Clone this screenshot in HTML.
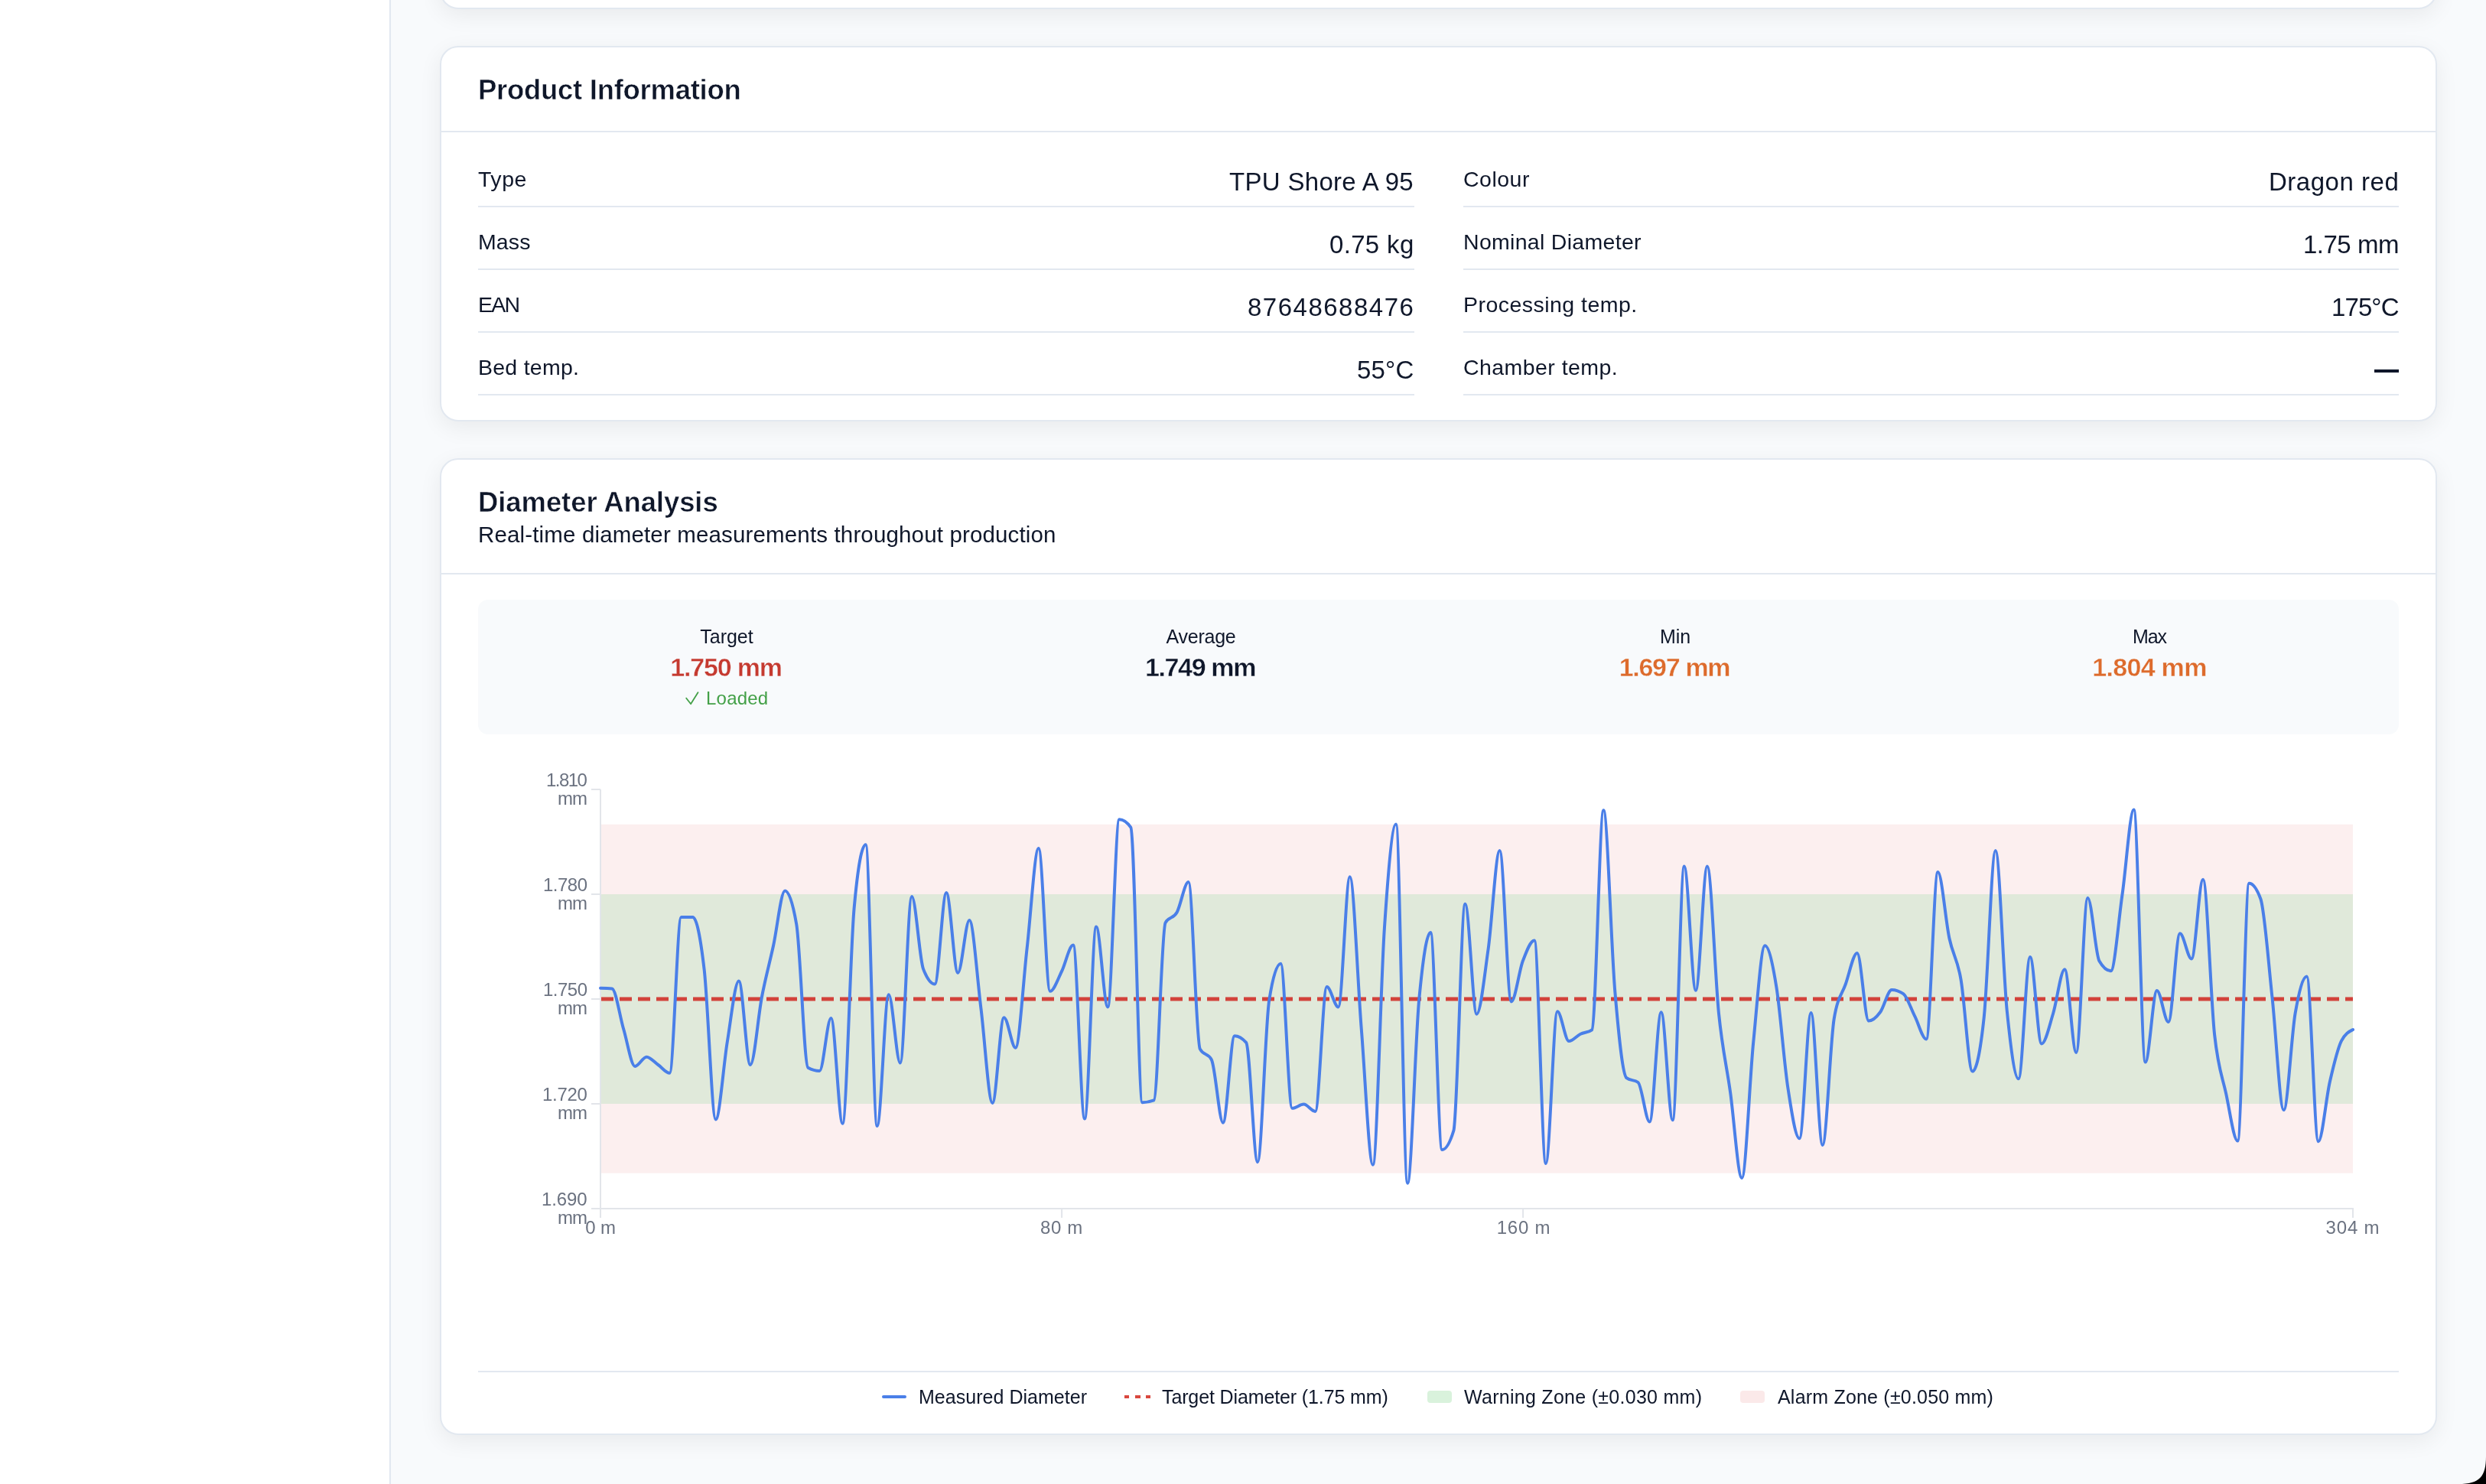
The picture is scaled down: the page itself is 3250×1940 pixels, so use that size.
<!DOCTYPE html>
<html><head><meta charset="utf-8"><title>Diameter Analysis</title><style>
html,body{margin:0;padding:0;}
body{width:3250px;height:1940px;position:relative;overflow:hidden;background:#f8fafc;font-family:"Liberation Sans",sans-serif;}
@media (max-width:2400px){body{zoom:0.5;}}
.t{position:absolute;white-space:nowrap;will-change:transform;}
.sb{position:absolute;left:0;top:0;width:509px;height:1940px;background:#fff;border-right:2px solid #e2e8f0;}
.card{position:absolute;left:575px;width:2607px;background:#fff;border:2px solid #e2e8f0;border-radius:24px;box-shadow:0 8px 30px rgba(0,0,0,0.065);}
.hl{position:absolute;height:2px;background:#e2e8f0;}
</style></head><body>
<div class="sb"></div>
<div class="card" style="top:-298px;height:306px;"></div>
<div class="card" style="top:60px;height:487px;"></div>
<div class="card" style="top:599px;height:1273px;"></div>
<div class="hl" style="left:577px;width:2607px;top:171px;"></div>
<div class="hl" style="left:577px;width:2607px;top:749px;"></div>
<div class="t" style="left:624.5px;top:100.1px;font-size:36.5px;line-height:36.5px;font-weight:700;color:#0f172a;letter-spacing:-0.28px;-webkit-text-stroke:0.5px #fff;">Product Information</div>
<div class="hl" style="left:625px;width:1224px;top:269px;"></div>
<div class="t" style="left:625.0px;top:219.6px;font-size:28.5px;line-height:28.5px;font-weight:400;color:#0f172a;letter-spacing:0.53px;">Type</div>
<div class="t" style="right:1401.7px;top:221.1px;font-size:33px;line-height:33px;font-weight:400;color:#0f172a;letter-spacing:0.31px;">TPU Shore A 95</div>
<div class="hl" style="left:625px;width:1224px;top:351px;"></div>
<div class="t" style="left:625.0px;top:301.6px;font-size:28.5px;line-height:28.5px;font-weight:400;color:#0f172a;letter-spacing:0.10px;">Mass</div>
<div class="t" style="right:1401.7px;top:303.1px;font-size:33px;line-height:33px;font-weight:400;color:#0f172a;letter-spacing:0.33px;">0.75 kg</div>
<div class="hl" style="left:625px;width:1224px;top:433px;"></div>
<div class="t" style="left:625.0px;top:383.6px;font-size:28.5px;line-height:28.5px;font-weight:400;color:#0f172a;letter-spacing:-1.80px;">EAN</div>
<div class="t" style="right:1400.5px;top:385.1px;font-size:33px;line-height:33px;font-weight:400;color:#0f172a;letter-spacing:1.50px;">87648688476</div>
<div class="hl" style="left:625px;width:1224px;top:515px;"></div>
<div class="t" style="left:625.0px;top:465.6px;font-size:28.5px;line-height:28.5px;font-weight:400;color:#0f172a;letter-spacing:0.25px;">Bed temp.</div>
<div class="t" style="right:1401.8px;top:467.1px;font-size:33px;line-height:33px;font-weight:400;color:#0f172a;letter-spacing:0.20px;">55°C</div>
<div class="hl" style="left:1913px;width:1223px;top:269px;"></div>
<div class="t" style="left:1913.0px;top:219.6px;font-size:28.5px;line-height:28.5px;font-weight:400;color:#0f172a;letter-spacing:0.50px;">Colour</div>
<div class="t" style="right:113.5px;top:221.1px;font-size:33px;line-height:33px;font-weight:400;color:#0f172a;letter-spacing:0.52px;">Dragon red</div>
<div class="hl" style="left:1913px;width:1223px;top:351px;"></div>
<div class="t" style="left:1913.0px;top:301.6px;font-size:28.5px;line-height:28.5px;font-weight:400;color:#0f172a;letter-spacing:0.30px;">Nominal Diameter</div>
<div class="t" style="right:114.5px;top:303.1px;font-size:33px;line-height:33px;font-weight:400;color:#0f172a;letter-spacing:-0.50px;">1.75 mm</div>
<div class="hl" style="left:1913px;width:1223px;top:433px;"></div>
<div class="t" style="left:1913.0px;top:383.6px;font-size:28.5px;line-height:28.5px;font-weight:400;color:#0f172a;letter-spacing:0.47px;">Processing temp.</div>
<div class="t" style="right:114.9px;top:385.1px;font-size:33px;line-height:33px;font-weight:400;color:#0f172a;letter-spacing:-0.90px;">175°C</div>
<div class="hl" style="left:1913px;width:1223px;top:515px;"></div>
<div class="t" style="left:1913.0px;top:465.6px;font-size:28.5px;line-height:28.5px;font-weight:400;color:#0f172a;letter-spacing:0.44px;">Chamber temp.</div>
<div style="position:absolute;left:3104px;top:483.4px;width:32px;height:3.4px;background:#0f172a"></div>
<div class="t" style="left:624.5px;top:638.8px;font-size:36.5px;line-height:36.5px;font-weight:700;color:#0f172a;letter-spacing:-0.09px;-webkit-text-stroke:0.5px #fff;">Diameter Analysis</div>
<div class="t" style="left:625.0px;top:683.5px;font-size:29.5px;line-height:29.5px;font-weight:400;color:#0f172a;letter-spacing:0.15px;">Real-time diameter measurements throughout production</div>
<div style="position:absolute;left:625px;top:784px;width:2511px;height:176px;background:#f8fafc;border-radius:13px;"></div>
<div class="t" style="left:-50.0px;width:2000px;text-align:center;top:820.0px;font-size:25px;line-height:25px;font-weight:400;color:#0f172a;letter-spacing:-0.02px;">Target</div>
<div class="t" style="left:-50.6px;width:2000px;text-align:center;top:855.2px;font-size:34px;line-height:34px;font-weight:700;color:#c53a30;letter-spacing:-1.20px;-webkit-text-stroke:0.4px #f8fafc;">1.750 mm</div>
<div class="t" style="left:569.9px;width:2000px;text-align:center;top:820.0px;font-size:25px;line-height:25px;font-weight:400;color:#0f172a;letter-spacing:-0.23px;">Average</div>
<div class="t" style="left:569.3px;width:2000px;text-align:center;top:855.2px;font-size:34px;line-height:34px;font-weight:700;color:#0f172a;letter-spacing:-1.36px;-webkit-text-stroke:0.4px #f8fafc;">1.749 mm</div>
<div class="t" style="left:1190.0px;width:2000px;text-align:center;top:820.0px;font-size:25px;line-height:25px;font-weight:400;color:#0f172a;letter-spacing:-0.10px;">Min</div>
<div class="t" style="left:1189.3px;width:2000px;text-align:center;top:855.2px;font-size:34px;line-height:34px;font-weight:700;color:#dd6b2c;letter-spacing:-1.30px;-webkit-text-stroke:0.4px #f8fafc;">1.697 mm</div>
<div class="t" style="left:1809.5px;width:2000px;text-align:center;top:820.0px;font-size:25px;line-height:25px;font-weight:400;color:#0f172a;letter-spacing:-1.05px;">Max</div>
<div class="t" style="left:1809.6px;width:2000px;text-align:center;top:855.2px;font-size:34px;line-height:34px;font-weight:700;color:#dd6b2c;letter-spacing:-0.71px;-webkit-text-stroke:0.4px #f8fafc;">1.804 mm</div>
<div class="t" style="left:922.6px;top:901.0px;font-size:24px;line-height:24px;font-weight:400;color:#43a047;letter-spacing:0.22px;">Loaded</div>
<svg style="position:absolute;left:890px;top:898px" width="30" height="30"><polyline points="7.2,14.7 13.1,22.3 22.5,7.3" fill="none" stroke="#43a047" stroke-width="1.8" stroke-linecap="round" stroke-linejoin="round"/></svg>
<svg style="position:absolute;left:0;top:0" width="3250" height="1940"><rect x="786" y="1077.7" width="2290" height="456" fill="#fcefef"/><rect x="786" y="1169" width="2290" height="274" fill="#e0e9da"/><line x1="785" y1="1032" x2="785" y2="1592" stroke="#e2e5ea" stroke-width="2"/><line x1="773" y1="1580" x2="3077" y2="1580" stroke="#e2e5ea" stroke-width="2"/><line x1="773" y1="1032" x2="785" y2="1032" stroke="#e2e5ea" stroke-width="2"/><line x1="773" y1="1169" x2="785" y2="1169" stroke="#e2e5ea" stroke-width="2"/><line x1="773" y1="1306" x2="785" y2="1306" stroke="#e2e5ea" stroke-width="2"/><line x1="773" y1="1443" x2="785" y2="1443" stroke="#e2e5ea" stroke-width="2"/><line x1="773" y1="1580" x2="785" y2="1580" stroke="#e2e5ea" stroke-width="2"/><line x1="785" y1="1580" x2="785" y2="1592" stroke="#e2e5ea" stroke-width="2"/><line x1="1388.1" y1="1580" x2="1388.1" y2="1592" stroke="#e2e5ea" stroke-width="2"/><line x1="1991.1" y1="1580" x2="1991.1" y2="1592" stroke="#e2e5ea" stroke-width="2"/><line x1="3076" y1="1580" x2="3076" y2="1592" stroke="#e2e5ea" stroke-width="2"/><line x1="786" y1="1306" x2="3076" y2="1306" stroke="#d2423a" stroke-width="5" stroke-dasharray="16 8"/><path d="M785.0,1291.7C790.0,1291.8,795.0,1291.9,800.1,1292.4C805.1,1292.9,810.1,1328.1,815.1,1345.0C820.2,1361.9,825.2,1394.0,830.2,1394.0C835.2,1394.0,840.3,1381.7,845.3,1381.7C850.3,1381.7,855.3,1388.5,860.4,1392.0C865.4,1395.5,870.4,1402.8,875.4,1402.8C880.5,1402.8,885.5,1199.0,890.5,1199.0C895.5,1199.0,900.6,1199.0,905.6,1199.0C910.6,1199.0,915.6,1223.9,920.7,1268.0C925.7,1312.1,930.7,1463.4,935.7,1463.4C940.7,1463.4,945.8,1392.2,950.8,1362.0C955.8,1331.8,960.8,1282.5,965.9,1282.5C970.9,1282.5,975.9,1392.0,980.9,1392.0C986.0,1392.0,991.0,1329.0,996.0,1303.0C1001.0,1277.0,1006.1,1259.1,1011.1,1236.0C1016.1,1212.9,1021.1,1164.4,1026.2,1164.4C1031.2,1164.4,1036.2,1178.9,1041.2,1208.0C1046.3,1237.1,1051.3,1393.0,1056.3,1395.8C1061.3,1398.6,1066.4,1400.0,1071.4,1400.0C1076.4,1400.0,1081.4,1331.0,1086.4,1331.0C1091.5,1331.0,1096.5,1468.7,1101.5,1468.7C1106.5,1468.7,1111.6,1243.0,1116.6,1187.5C1121.6,1132.0,1126.6,1104.3,1131.7,1104.3C1136.7,1104.3,1141.7,1472.1,1146.7,1472.1C1151.8,1472.1,1156.8,1300.3,1161.8,1300.3C1166.8,1300.3,1171.9,1389.6,1176.9,1389.6C1181.9,1389.6,1186.9,1172.0,1192.0,1172.0C1197.0,1172.0,1202.0,1253.3,1207.0,1266.6C1212.1,1279.9,1217.1,1286.5,1222.1,1286.5C1227.1,1286.5,1232.1,1166.9,1237.2,1166.9C1242.2,1166.9,1247.2,1271.7,1252.2,1271.7C1257.3,1271.7,1262.3,1203.0,1267.3,1203.0C1272.3,1203.0,1277.4,1278.2,1282.4,1318.0C1287.4,1357.8,1292.4,1441.9,1297.5,1441.9C1302.5,1441.9,1307.5,1330.2,1312.5,1330.2C1317.6,1330.2,1322.6,1369.7,1327.6,1369.7C1332.6,1369.7,1337.7,1282.4,1342.7,1239.0C1347.7,1195.6,1352.7,1109.1,1357.8,1109.1C1362.8,1109.1,1367.8,1295.8,1372.8,1295.8C1377.8,1295.8,1382.9,1280.0,1387.9,1270.0C1392.9,1260.0,1397.9,1235.6,1403.0,1235.6C1408.0,1235.6,1413.0,1462.5,1418.0,1462.5C1423.1,1462.5,1428.1,1211.6,1433.1,1211.6C1438.1,1211.6,1443.2,1316.4,1448.2,1316.4C1453.2,1316.4,1458.2,1071.3,1463.3,1071.3C1468.3,1071.3,1473.3,1074.7,1478.3,1081.6C1483.4,1088.5,1488.4,1441.2,1493.4,1441.2C1498.4,1441.2,1503.4,1440.3,1508.5,1438.4C1513.5,1436.5,1518.5,1215.5,1523.5,1206.4C1528.6,1197.3,1533.6,1201.6,1538.6,1192.7C1543.6,1183.8,1548.7,1153.1,1553.7,1153.1C1558.7,1153.1,1563.7,1362.2,1568.8,1371.4C1573.8,1380.6,1578.8,1376.0,1583.8,1385.2C1588.9,1394.4,1593.9,1467.7,1598.9,1467.7C1603.9,1467.7,1609.0,1354.2,1614.0,1354.2C1619.0,1354.2,1624.0,1357.1,1629.1,1362.8C1634.1,1368.5,1639.1,1519.2,1644.1,1519.2C1649.1,1519.2,1654.2,1339.9,1659.2,1307.8C1664.2,1275.7,1669.2,1259.7,1674.3,1259.7C1679.3,1259.7,1684.3,1448.8,1689.3,1448.8C1694.4,1448.8,1699.4,1443.6,1704.4,1443.6C1709.4,1443.6,1714.5,1452.9,1719.5,1452.9C1724.5,1452.9,1729.5,1290.0,1734.6,1290.0C1739.6,1290.0,1744.6,1316.4,1749.6,1316.4C1754.7,1316.4,1759.7,1146.3,1764.7,1146.3C1769.7,1146.3,1774.8,1282.9,1779.8,1345.6C1784.8,1408.3,1789.8,1522.7,1794.8,1522.7C1799.9,1522.7,1804.9,1287.5,1809.9,1213.3C1814.9,1139.1,1820.0,1077.5,1825.0,1077.5C1830.0,1077.5,1835.0,1546.7,1840.1,1546.7C1845.1,1546.7,1850.1,1362.4,1855.1,1307.8C1860.2,1253.2,1865.2,1219.1,1870.2,1219.1C1875.2,1219.1,1880.3,1503.1,1885.3,1503.1C1890.3,1503.1,1895.3,1494.7,1900.4,1478.0C1905.4,1461.3,1910.4,1181.7,1915.4,1181.7C1920.5,1181.7,1925.5,1325.7,1930.5,1325.7C1935.5,1325.7,1940.5,1276.4,1945.6,1240.8C1950.6,1205.2,1955.6,1111.9,1960.6,1111.9C1965.7,1111.9,1970.7,1309.5,1975.7,1309.5C1980.7,1309.5,1985.8,1269.6,1990.8,1256.3C1995.8,1243.0,2000.8,1229.4,2005.9,1229.4C2010.9,1229.4,2015.9,1521.0,2020.9,1521.0C2026.0,1521.0,2031.0,1322.3,2036.0,1322.3C2041.0,1322.3,2046.1,1361.1,2051.1,1361.1C2056.1,1361.1,2061.1,1354.3,2066.2,1351.8C2071.2,1349.3,2076.2,1350.0,2081.2,1346.3C2086.2,1342.6,2091.3,1059.3,2096.3,1059.3C2101.3,1059.3,2106.3,1239.2,2111.4,1297.5C2116.4,1355.8,2121.4,1405.3,2126.4,1409.2C2131.5,1413.1,2136.5,1411.1,2141.5,1415.0C2146.5,1418.9,2151.6,1466.6,2156.6,1466.6C2161.6,1466.6,2166.6,1323.3,2171.7,1323.3C2176.7,1323.3,2181.7,1464.2,2186.7,1464.2C2191.8,1464.2,2196.8,1132.5,2201.8,1132.5C2206.8,1132.5,2211.9,1294.8,2216.9,1294.8C2221.9,1294.8,2226.9,1132.5,2231.9,1132.5C2237.0,1132.5,2242.0,1275.8,2247.0,1325.0C2252.0,1374.3,2257.1,1392.2,2262.1,1428.0C2267.1,1463.8,2272.1,1539.9,2277.2,1539.9C2282.2,1539.9,2287.2,1413.4,2292.2,1362.8C2297.3,1312.2,2302.3,1236.3,2307.3,1236.3C2312.3,1236.3,2317.4,1259.5,2322.4,1290.6C2327.4,1321.7,2332.4,1390.1,2337.5,1423.0C2342.5,1456.0,2347.5,1488.3,2352.5,1488.3C2357.6,1488.3,2362.6,1324.0,2367.6,1324.0C2372.6,1324.0,2377.6,1496.9,2382.7,1496.9C2387.7,1496.9,2392.7,1362.2,2397.7,1331.9C2402.8,1301.6,2407.8,1300.8,2412.8,1286.5C2417.8,1272.2,2422.9,1246.0,2427.9,1246.0C2432.9,1246.0,2437.9,1334.6,2443.0,1334.6C2448.0,1334.6,2453.0,1330.1,2458.0,1323.3C2463.1,1316.5,2468.1,1294.0,2473.1,1294.0C2478.1,1294.0,2483.2,1295.7,2488.2,1299.2C2493.2,1302.7,2498.2,1318.5,2503.2,1328.4C2508.3,1338.3,2513.3,1358.4,2518.3,1358.4C2523.3,1358.4,2528.4,1140.0,2533.4,1140.0C2538.4,1140.0,2543.4,1203.6,2548.5,1227.0C2553.5,1250.4,2558.5,1251.4,2563.5,1280.3C2568.6,1309.2,2573.6,1400.6,2578.6,1400.6C2583.6,1400.6,2588.7,1377.1,2593.7,1330.2C2598.7,1283.3,2603.7,1111.9,2608.8,1111.9C2613.8,1111.9,2618.8,1271.9,2623.8,1321.6C2628.9,1371.3,2633.9,1410.3,2638.9,1410.3C2643.9,1410.3,2648.9,1251.1,2654.0,1251.1C2659.0,1251.1,2664.0,1364.5,2669.0,1364.5C2674.1,1364.5,2679.1,1341.2,2684.1,1325.0C2689.1,1308.8,2694.2,1267.3,2699.2,1267.3C2704.2,1267.3,2709.2,1375.9,2714.3,1375.9C2719.3,1375.9,2724.3,1173.8,2729.3,1173.8C2734.4,1173.8,2739.4,1247.6,2744.4,1256.3C2749.4,1265.0,2754.5,1269.3,2759.5,1269.3C2764.5,1269.3,2769.5,1203.7,2774.6,1168.6C2779.6,1133.5,2784.6,1058.6,2789.6,1058.6C2794.6,1058.6,2799.7,1388.6,2804.7,1388.6C2809.7,1388.6,2814.7,1295.1,2819.8,1295.1C2824.8,1295.1,2829.8,1336.0,2834.8,1336.0C2839.9,1336.0,2844.9,1220.2,2849.9,1220.2C2854.9,1220.2,2860.0,1253.5,2865.0,1253.5C2870.0,1253.5,2875.0,1149.7,2880.1,1149.7C2885.1,1149.7,2890.1,1305.8,2895.1,1352.5C2900.2,1399.2,2905.2,1406.7,2910.2,1429.9C2915.2,1453.1,2920.3,1491.5,2925.3,1491.5C2930.3,1491.5,2935.3,1154.7,2940.3,1154.7C2945.4,1154.7,2950.4,1161.6,2955.4,1175.3C2960.4,1189.0,2965.5,1258.1,2970.5,1304.1C2975.5,1350.1,2980.5,1451.1,2985.6,1451.1C2990.6,1451.1,2995.6,1353.8,3000.6,1324.7C3005.7,1295.6,3010.7,1276.6,3015.7,1276.6C3020.7,1276.6,3025.8,1492.3,3030.8,1492.3C3035.8,1492.3,3040.8,1435.9,3045.9,1414.0C3050.9,1392.1,3055.9,1370.7,3060.9,1360.8C3066.0,1350.9,3071.0,1348.5,3076.0,1346.0" fill="none" stroke="#4a7fe8" stroke-width="4" stroke-linejoin="round" stroke-linecap="round"/></svg>
<div class="t" style="right:2483.5px;top:1008.2px;font-size:24px;line-height:24px;font-weight:400;color:#6b7280;letter-spacing:-1.53px;">1.810</div>
<div class="t" style="right:2483.0px;top:1032.2px;font-size:24px;line-height:24px;font-weight:400;color:#6b7280;letter-spacing:-1.00px;">mm</div>
<div class="t" style="right:2482.5px;top:1145.2px;font-size:24px;line-height:24px;font-weight:400;color:#6b7280;letter-spacing:-0.50px;">1.780</div>
<div class="t" style="right:2483.0px;top:1169.2px;font-size:24px;line-height:24px;font-weight:400;color:#6b7280;letter-spacing:-1.00px;">mm</div>
<div class="t" style="right:2482.5px;top:1282.2px;font-size:24px;line-height:24px;font-weight:400;color:#6b7280;letter-spacing:-0.50px;">1.750</div>
<div class="t" style="right:2483.0px;top:1306.2px;font-size:24px;line-height:24px;font-weight:400;color:#6b7280;letter-spacing:-1.00px;">mm</div>
<div class="t" style="right:2482.3px;top:1419.2px;font-size:24px;line-height:24px;font-weight:400;color:#6b7280;letter-spacing:-0.32px;">1.720</div>
<div class="t" style="right:2483.0px;top:1443.2px;font-size:24px;line-height:24px;font-weight:400;color:#6b7280;letter-spacing:-1.00px;">mm</div>
<div class="t" style="right:2482.1px;top:1556.2px;font-size:24px;line-height:24px;font-weight:400;color:#6b7280;letter-spacing:-0.10px;">1.690</div>
<div class="t" style="right:2483.0px;top:1580.2px;font-size:24px;line-height:24px;font-weight:400;color:#6b7280;letter-spacing:-1.00px;">mm</div>
<div class="t" style="left:-215.1px;width:2000px;text-align:center;top:1592.7px;font-size:24px;line-height:24px;font-weight:400;color:#6b7280;letter-spacing:-0.10px;">0 m</div>
<div class="t" style="left:388.4px;width:2000px;text-align:center;top:1592.7px;font-size:24px;line-height:24px;font-weight:400;color:#6b7280;letter-spacing:0.67px;">80 m</div>
<div class="t" style="left:991.5px;width:2000px;text-align:center;top:1592.7px;font-size:24px;line-height:24px;font-weight:400;color:#6b7280;letter-spacing:0.75px;">160 m</div>
<div class="t" style="left:2076.4px;width:2000px;text-align:center;top:1592.7px;font-size:24px;line-height:24px;font-weight:400;color:#6b7280;letter-spacing:0.82px;">304 m</div>
<div class="hl" style="left:625px;width:2511px;top:1792px;"></div>
<div style="position:absolute;left:1153px;top:1824px;width:32px;height:4px;background:#4a7fe8;border-radius:2px"></div>
<div class="t" style="left:1201.0px;top:1814.3px;font-size:25px;line-height:25px;font-weight:400;color:#0f172a;letter-spacing:0.03px;">Measured Diameter</div>
<div style="position:absolute;left:1470px;top:1824px;width:6px;height:4px;background:#d9483f"></div>
<div style="position:absolute;left:1483.5px;top:1824px;width:7px;height:4px;background:#d9483f"></div>
<div style="position:absolute;left:1498px;top:1824px;width:6px;height:4px;background:#d9483f"></div>
<div class="t" style="left:1519.0px;top:1814.3px;font-size:25px;line-height:25px;font-weight:400;color:#0f172a;letter-spacing:-0.12px;">Target Diameter (1.75 mm)</div>
<div style="position:absolute;left:1866px;top:1818px;width:32px;height:16px;background:#d9f2dc;border-radius:4px"></div>
<div class="t" style="left:1914.0px;top:1814.3px;font-size:25px;line-height:25px;font-weight:400;color:#0f172a;letter-spacing:0.28px;">Warning Zone (±0.030 mm)</div>
<div style="position:absolute;left:2275px;top:1818px;width:32px;height:16px;background:#fbe9e9;border-radius:4px"></div>
<div class="t" style="left:2323.5px;top:1814.3px;font-size:25px;line-height:25px;font-weight:400;color:#0f172a;letter-spacing:0.20px;">Alarm Zone (±0.050 mm)</div>
<svg style="position:absolute;left:3200px;top:1890px" width="50" height="50"><path d="M50,14 C50,40 42,50 14,50 L50,50 Z" fill="#000"/></svg>
</body></html>
